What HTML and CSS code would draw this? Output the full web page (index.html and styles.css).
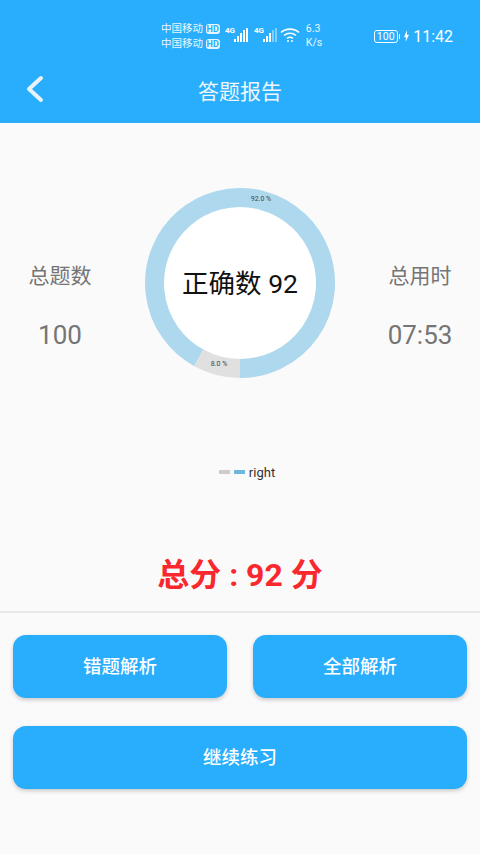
FILE: index.html
```html
<!DOCTYPE html>
<html lang="zh-CN">
<head>
    <meta charset="UTF-8">
    <title>答题报告</title>
    <link rel="stylesheet" href="styles.css">
</head>
<body>
    <!-- Header -->
    <header class="header">
        <div class="status-bar">
            <div class="carriers">
                <div class="carrier">中国移动 <span class="hd">HD</span></div>
                <div class="carrier">中国移动 <span class="hd">HD</span></div>
            </div>
            <svg class="signal" width="27" height="20" viewBox="0 0 27 20">
                <text x="0" y="7" class="net">4G</text>
                <g fill="#fff">
                    <rect x="9" y="13" width="2" height="3"/>
                    <rect x="12" y="10" width="2" height="6"/>
                    <rect x="15" y="7" width="2" height="9"/>
                    <rect x="18" y="4" width="2" height="12"/>
                    <rect x="21" y="2" width="2" height="14"/>
                </g>
            </svg>
            <svg class="signal" width="27" height="20" viewBox="0 0 27 20">
                <text x="0" y="7" class="net">4G</text>
                <g fill="#fff">
                    <rect x="9" y="13" width="2" height="3"/>
                    <rect x="12" y="10" width="2" height="6"/>
                    <rect x="15" y="7" width="2" height="9"/>
                </g>
                <g fill="#fff" opacity="0.4">
                    <rect x="18" y="4" width="2" height="12"/>
                    <rect x="21" y="2" width="2" height="14"/>
                </g>
            </svg>
            <svg class="wifi" width="20" height="16" viewBox="0 0 20 16" fill="none" stroke="#fff" stroke-width="1.6">
                <path d="M1 5.5C6 1 14 1 19 5.5"/>
                <path d="M4 8.5C7.5 5.5 12.5 5.5 16 8.5"/>
                <path d="M7 11.5C8.8 10 11.2 10 13 11.5"/>
                <circle cx="8" cy="14" r="1" fill="#fff" stroke="none"/>
                <circle cx="12" cy="14" r="1" fill="#fff" stroke="none"/>
            </svg>
            <div class="speed">6.3<br>K/s</div>
            <div class="battery"><span class="battery-box">100</span><span class="battery-tip"></span></div>
            <svg class="bolt" width="5" height="12" viewBox="0 0 5 10" preserveAspectRatio="none"><path d="M3 0L0 6H2L1.6 10L5 4H3Z" fill="#fff"/></svg>
            <div class="clock">11:42</div>
        </div>
        <div class="title-bar">
            <svg class="back" width="18" height="28" viewBox="0 0 18 28" fill="none" stroke="#e9f2f8" stroke-width="4" stroke-linecap="round" stroke-linejoin="round">
                <path d="M15 3L3 14L15 25"/>
            </svg>
            <h1 class="title">答题报告</h1>
        </div>
    </header>

    <!-- Chart -->
    <section class="report">
        <div class="stat">
            <div class="stat-label">总题数</div>
            <div class="stat-value">100</div>
        </div>
        <svg class="donut" width="240" height="240" viewBox="0 0 240 240">
            <circle cx="120" cy="120" r="76" fill="#fff"/>
            <path d="M120 205.5A85.5 85.5 0 1 0 78.8 194.9" fill="none" stroke="#add8ee" stroke-width="19"/>
            <path d="M120 205.5A85.5 85.5 0 0 1 78.8 194.9" fill="none" stroke="#e0e0e0" stroke-width="19"/>
            <text x="141" y="38" class="slice-label">92.0 %</text>
            <text x="99" y="203" class="slice-label">8.0 %</text>
            <text x="120" y="130" class="center-label">正确数 92</text>
        </svg>
        <div class="stat">
            <div class="stat-label">总用时</div>
            <div class="stat-value">07:53</div>
        </div>
    </section>

    <div class="legend">
        <span class="swatch swatch-gray"></span>
        <span class="swatch swatch-blue"></span>
        <span class="legend-text">right</span>
    </div>

    <div class="score">总分 : 92 分</div>

    <!-- Buttons -->
    <div class="actions">
        <div class="btn">错题解析</div>
        <div class="btn">全部解析</div>
        <div class="btn btn-wide">继续练习</div>
    </div>
</body>
</html>
```

FILE: styles.css
```css
* {
    box-sizing: border-box;
    margin: 0;
    padding: 0;
}
body {
    font-family: Roboto, "Noto Sans CJK SC", sans-serif;
    width: 480px;
    height: 854px;
    overflow: hidden;
    background-color: #fafafa;
}
.header {
    height: 123px;
    background-color: #29aefe;
    color: #fff;
}
.status-bar {
    height: 60px;
    display: flex;
    align-items: center;
    padding: 12px 27px 0 161px;
}
.carriers {
    width: 59px;
    font-size: 10.5px;
    line-height: 15px;
    color: #eaf6ff;
}
.carrier {
    white-space: nowrap;
}
.hd {
    display: inline-block;
    background-color: #e8f5ff;
    color: #29aefe;
    font-size: 9px;
    font-weight: 700;
    line-height: 10px;
    height: 10px;
    padding: 0 1px;
    border-radius: 3px;
}
.signal {
    margin: 0 0 0 5px;
    flex: none;
}
.signal + .signal {
    margin-left: 2px;
}
.net {
    font-size: 8px;
    font-weight: 700;
    fill: #fff;
}
.wifi {
    margin: 0 0 2px -1px;
    flex: none;
}
.speed {
    width: 24px;
    margin-left: 6px;
    font-size: 10.5px;
    line-height: 14px;
    color: #eaf6ff;
}
.battery {
    display: flex;
    align-items: center;
    margin-left: 44px;
}
.battery-box {
    width: 24px;
    height: 13px;
    border: 1px solid #fff;
    border-radius: 3px;
    font-size: 10.5px;
    line-height: 11px;
    text-align: center;
}
.battery-tip {
    width: 1.5px;
    height: 5px;
    margin-left: 1px;
    background-color: #fff;
}
.bolt {
    margin-left: 4px;
}
.clock {
    margin-left: 4px;
    font-size: 16px;
}
.title-bar {
    position: relative;
    height: 60px;
    display: flex;
    align-items: center;
    justify-content: center;
}
.back {
    position: absolute;
    left: 26px;
    top: 15px;
}
.title {
    font-size: 21px;
    font-weight: 400;
    margin-bottom: 1px;
    color: #eef7fd;
}
.report {
    display: grid;
    grid-template-columns: 120px 240px 120px;
    align-items: center;
    margin-top: 40px;
}
.stat {
    text-align: center;
    color: #757575;
    margin-top: 47px;
}
.stat-label {
    font-size: 21px;
    line-height: 26px;
}
.stat-value {
    font-size: 26px;
    line-height: 32px;
    margin-top: 30px;
}
.slice-label {
    font-size: 7px;
    fill: #444;
    text-anchor: middle;
}
.center-label {
    font-size: 26.5px;
    fill: #111;
    text-anchor: middle;
}
.legend {
    display: flex;
    align-items: center;
    justify-content: center;
    gap: 4px;
    margin-top: 61px;
    padding-left: 14px;
    height: 16px;
}
.swatch {
    width: 11px;
    height: 4px;
}
.swatch-gray {
    background-color: #ccc;
}
.swatch-blue {
    background-color: #6db8de;
}
.legend-text {
    font-size: 13px;
    color: #333;
}
.score {
    margin-top: 74px;
    height: 59px;
    border-bottom: 2px solid #e8e8e8;
    text-align: center;
    font-size: 32px;
    line-height: 42px;
    font-weight: 700;
    color: #f9282e;
}
.actions {
    display: grid;
    grid-template-columns: 214px 214px;
    justify-content: space-between;
    row-gap: 28px;
    padding: 22px 13px 0;
}
.btn {
    height: 63px;
    line-height: 64px;
    text-align: center;
    font-size: 18.5px;
    font-weight: 500;
    color: #fff;
    background-color: #29aefe;
    border-radius: 13px;
    box-shadow: 0 2px 4px rgba(0,0,0,0.2);
}
.btn-wide {
    grid-column: 1 / 3;
}
```
